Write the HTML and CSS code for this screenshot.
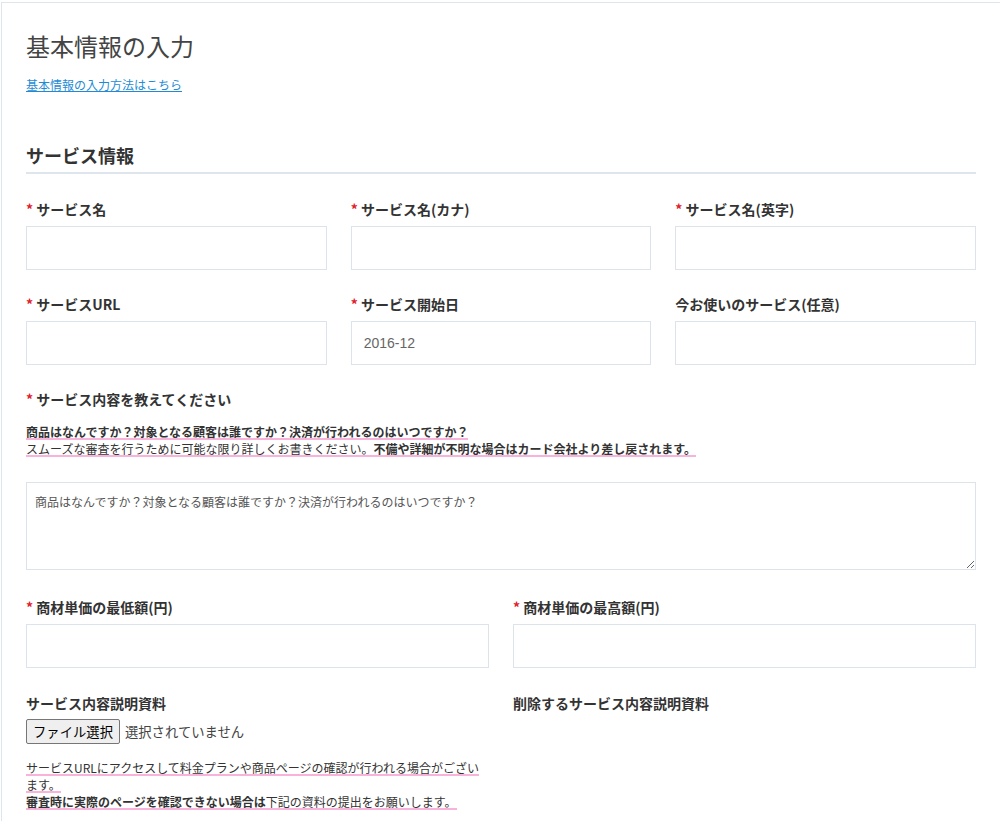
FILE: index.html
```html
<!DOCTYPE html>
<html lang="ja">
<head>
<meta charset="utf-8">
<title>基本情報の入力</title>
<link rel="stylesheet" href="styles.css">
</head>
<body>
<div class="page">
  <h1 class="title">基本情報の入力</h1>
  <a class="howto" href="#">基本情報の入力方法はこちら</a>

  <section class="section">
    <h2 class="section-title">サービス情報</h2>

    <div class="grid grid-3">
      <div class="field">
        <label class="label"><span class="req">*</span> サービス名</label>
        <input class="input" type="text">
      </div>
      <div class="field">
        <label class="label"><span class="req">*</span> サービス名(カナ)</label>
        <input class="input" type="text">
      </div>
      <div class="field">
        <label class="label"><span class="req">*</span> サービス名(英字)</label>
        <input class="input" type="text">
      </div>
      <div class="field">
        <label class="label"><span class="req">*</span> サービスURL</label>
        <input class="input" type="text">
      </div>
      <div class="field">
        <label class="label"><span class="req">*</span> サービス開始日</label>
        <input class="input input-date" type="text" value="2016-12">
      </div>
      <div class="field">
        <label class="label">今お使いのサービス(任意)</label>
        <input class="input" type="text">
      </div>
    </div>

    <div class="field field-desc">
      <label class="label label-desc"><span class="req">*</span> サービス内容を教えてください</label>
      <p class="note">
        <span class="marker"><strong>商品はなんですか？対象となる顧客は誰ですか？決済が行われるのはいつですか？</strong></span><br>
        <span class="marker">スムーズな審査を行うために可能な限り詳しくお書きください。<strong>不備や詳細が不明な場合はカード会社より差し戻されます。</strong></span>
      </p>
      <textarea class="textarea" placeholder="商品はなんですか？対象となる顧客は誰ですか？決済が行われるのはいつですか？"></textarea>
    </div>

    <div class="grid grid-2 row-price">
      <div class="field">
        <label class="label"><span class="req">*</span> 商材単価の最低額(円)</label>
        <input class="input" type="text">
      </div>
      <div class="field">
        <label class="label"><span class="req">*</span> 商材単価の最高額(円)</label>
        <input class="input" type="text">
      </div>
    </div>

    <div class="grid grid-2 row-file">
      <div class="field">
        <span class="label">サービス内容説明資料</span>
        <label class="file">
          <input class="file-input" type="file">
          <span class="file-btn">ファイル選択</span>
          <span class="file-name">選択されていません</span>
        </label>
        <p class="note note-file">
          <span class="marker">サービスURLにアクセスして料金プランや商品ページの確認が行われる場合がございます。</span><br>
          <span class="marker"><strong>審査時に実際のページを確認できない場合は</strong>下記の資料の提出をお願いします。</span>
        </p>
      </div>
      <div class="field">
        <span class="label">削除するサービス内容説明資料</span>
      </div>
    </div>
  </section>
</div>
</body>
</html>
```

FILE: styles.css
```css
html, body {
  margin: 0;
  padding: 0;
  background: #ffffff;
}

body {
  font-family: "Noto Sans CJK JP", "Noto Sans", sans-serif;
  color: #333333;
}

.page {
  margin: 2px 0 0 1px;
  border-top: 1px solid #dfe5ec;
  border-left: 1px solid #dfe5ec;
  padding: 25px 24px 40px 24px;
}

.title {
  margin: 0;
  font-size: 24px;
  line-height: 36px;
  font-weight: 400;
  color: #444444;
}

.howto {
  display: inline-block;
  margin-top: 12px;
  font-size: 12px;
  line-height: 17px;
  color: #1f8bd6;
  text-decoration: underline;
}

.section {
  margin-top: 47px;
}

.section-title {
  margin: 0;
  font-size: 18px;
  line-height: 27px;
  font-weight: 700;
  color: #333333;
  padding-bottom: 3px;
  border-bottom: 2px solid #dfe5ec;
}

.grid {
  display: grid;
  column-gap: 24px;
  row-gap: 24px;
}

.grid-3 {
  grid-template-columns: repeat(3, 1fr);
  margin-top: 25px;
}

.grid-2 {
  grid-template-columns: repeat(2, 1fr);
}

.field {
  min-width: 0;
}

.label {
  display: block;
  font-size: 14px;
  line-height: 20px;
  font-weight: 700;
  color: #333333;
  margin-bottom: 7px;
}

.req {
  color: #e0202a;
}

.input {
  display: block;
  box-sizing: border-box;
  width: 100%;
  height: 44px;
  margin: 0;
  padding: 0 12px;
  border: 1px solid #dce3ea;
  border-radius: 0;
  background: #ffffff;
  font-family: "Liberation Sans", Arial, sans-serif;
  font-size: 14px;
  color: #666666;
  outline: none;
}

.field-desc {
  margin-top: 24px;
}

.label-desc {
  margin-bottom: 14px;
}

.note {
  margin: 0;
  font-size: 12px;
  line-height: 17px;
  color: #333333;
}

.note strong {
  font-weight: 700;
}

.marker {
  background-image: linear-gradient(to bottom, transparent calc(100% - 2px), #f9b3da calc(100% - 2px));
  background-repeat: no-repeat;
  -webkit-box-decoration-break: clone;
  box-decoration-break: clone;
}

.textarea {
  display: block;
  box-sizing: border-box;
  width: 100%;
  height: 88px;
  margin-top: 25px;
  padding: 10px 8px;
  border: 1px solid #dce3ea;
  border-radius: 0;
  font-family: "Noto Sans CJK JP", sans-serif;
  font-size: 12px;
  line-height: 17px;
  color: #444444;
  resize: vertical;
  outline: none;
}

.textarea::placeholder {
  color: #555555;
}

.row-price {
  margin-top: 27px;
}

.row-file {
  margin-top: 25px;
}

.row-file .label {
  margin-bottom: 6px;
}

.file {
  display: flex;
  align-items: center;
  gap: 5px;
  height: 25px;
  font-family: "Noto Sans CJK JP", sans-serif;
  font-size: 13.333px;
  cursor: pointer;
}

.file-input {
  display: none;
}

.file-btn {
  box-sizing: border-box;
  height: 25px;
  padding: 0 6px;
  border: 1px solid #767676;
  border-radius: 2px;
  background: #efefef;
  color: #000000;
  line-height: 23px;
}

.file-name {
  color: #444444;
}

.note-file {
  margin-top: 15px;
}
```
